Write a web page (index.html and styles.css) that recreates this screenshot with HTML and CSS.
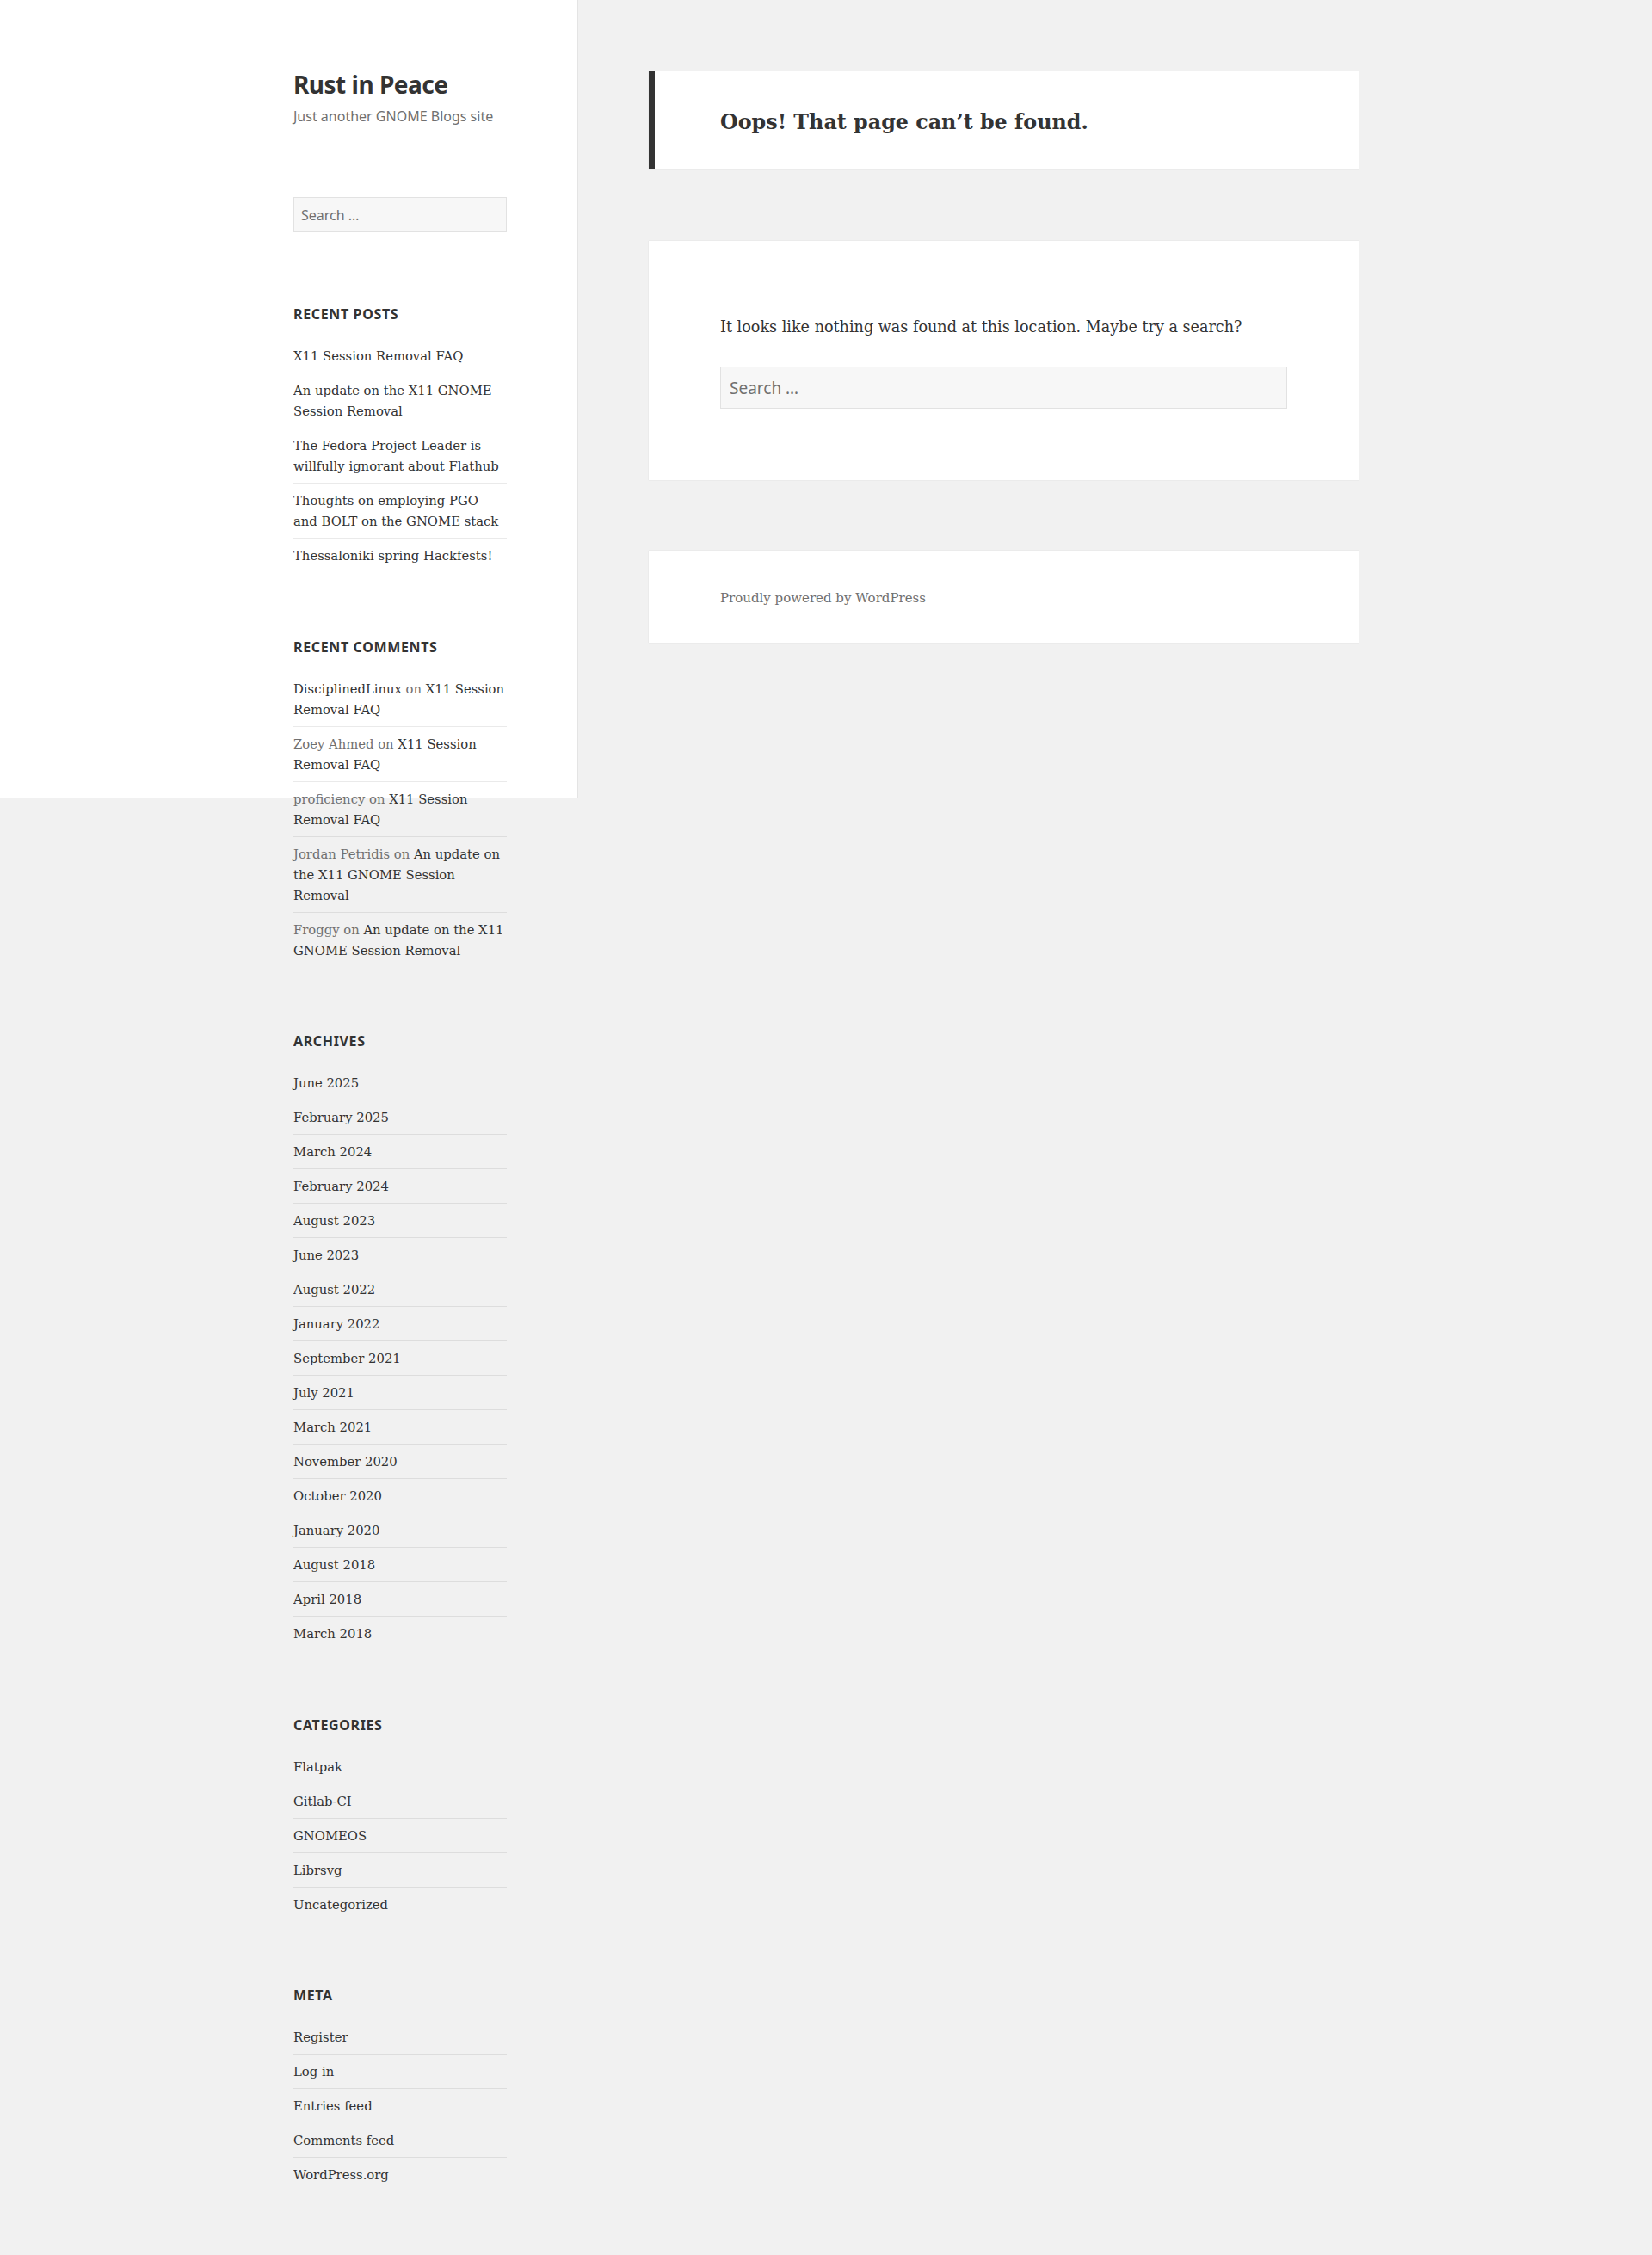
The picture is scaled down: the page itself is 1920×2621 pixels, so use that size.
FILE: index.html
```html
<!DOCTYPE html>
<html lang="en">
<head>
    <meta charset="UTF-8">
    <meta name="viewport" content="width=device-width, initial-scale=1.0">
    <title>Page not found – Rust in Peace</title>
    <link rel="stylesheet" href="styles.css">
</head>
<body>
    <div class="site">
        <div class="sidebar">
            <header class="site-header">
                <p class="site-title"><a href="#">Rust in Peace</a></p>
                <p class="site-description">Just another GNOME Blogs site</p>
            </header>

            <div class="widget-area">
                <section class="widget widget-search">
                    <form class="search-form">
                        <input type="search" class="search-field" placeholder="Search &hellip;">
                    </form>
                </section>

                <section class="widget">
                    <h2 class="widget-title">Recent Posts</h2>
                    <ul>
                        <li><a href="#">X11 Session Removal FAQ</a></li>
                        <li><a href="#">An update on the X11 GNOME<br>Session Removal</a></li>
                        <li><a href="#">The Fedora Project Leader is<br>willfully ignorant about Flathub</a></li>
                        <li><a href="#">Thoughts on employing PGO<br>and BOLT on the GNOME stack</a></li>
                        <li><a href="#">Thessaloniki spring Hackfests!</a></li>
                    </ul>
                </section>

                <section class="widget">
                    <h2 class="widget-title">Recent Comments</h2>
                    <ul class="comments">
                        <li><a href="#">DisciplinedLinux</a> on <a href="#">X11 Session<br>Removal FAQ</a></li>
                        <li>Zoey Ahmed on <a href="#">X11 Session<br>Removal FAQ</a></li>
                        <li>proficiency on <a href="#">X11 Session<br>Removal FAQ</a></li>
                        <li>Jordan Petridis on <a href="#">An update on<br>the X11 GNOME Session<br>Removal</a></li>
                        <li>Froggy on <a href="#">An update on the X11<br>GNOME Session Removal</a></li>
                    </ul>
                </section>

                <section class="widget">
                    <h2 class="widget-title">Archives</h2>
                    <ul>
                        <li><a href="#">June 2025</a></li>
                        <li><a href="#">February 2025</a></li>
                        <li><a href="#">March 2024</a></li>
                        <li><a href="#">February 2024</a></li>
                        <li><a href="#">August 2023</a></li>
                        <li><a href="#">June 2023</a></li>
                        <li><a href="#">August 2022</a></li>
                        <li><a href="#">January 2022</a></li>
                        <li><a href="#">September 2021</a></li>
                        <li><a href="#">July 2021</a></li>
                        <li><a href="#">March 2021</a></li>
                        <li><a href="#">November 2020</a></li>
                        <li><a href="#">October 2020</a></li>
                        <li><a href="#">January 2020</a></li>
                        <li><a href="#">August 2018</a></li>
                        <li><a href="#">April 2018</a></li>
                        <li><a href="#">March 2018</a></li>
                    </ul>
                </section>

                <section class="widget">
                    <h2 class="widget-title">Categories</h2>
                    <ul>
                        <li><a href="#">Flatpak</a></li>
                        <li><a href="#">Gitlab-CI</a></li>
                        <li><a href="#">GNOMEOS</a></li>
                        <li><a href="#">Librsvg</a></li>
                        <li><a href="#">Uncategorized</a></li>
                    </ul>
                </section>

                <section class="widget">
                    <h2 class="widget-title">Meta</h2>
                    <ul>
                        <li><a href="#">Register</a></li>
                        <li><a href="#">Log in</a></li>
                        <li><a href="#">Entries feed</a></li>
                        <li><a href="#">Comments feed</a></li>
                        <li><a href="#">WordPress.org</a></li>
                    </ul>
                </section>
            </div>
        </div>

        <main class="site-main">
            <section class="page-header">
                <h1 class="page-title">Oops! That page can&rsquo;t be found.</h1>
            </section>

            <section class="page-content">
                <p>It looks like nothing was found at this location. Maybe try a search?</p>
                <form class="search-form">
                    <input type="search" class="search-field" placeholder="Search &hellip;">
                </form>
            </section>

            <footer class="site-footer">
                <a href="#">Proudly powered by WordPress</a>
            </footer>
        </main>
    </div>
</body>
</html>
```
FILE: styles.css
```css
body {
    margin: 0;
    color: #333;
    font-family: "DejaVu Serif", "Liberation Serif", serif;
    background:
        linear-gradient(#fff, #fff) 0 0 / 671px 927px no-repeat,
        linear-gradient(#e4e4e4, #e4e4e4) 0 0 / 672px 928px no-repeat,
        #f1f1f1;
}
a {
    color: #333;
    text-decoration: none;
}
.site {
    display: flex;
    align-items: flex-start;
}

/* sidebar */
.sidebar {
    width: 248px;
    margin-left: 341px;
    padding-top: 81px;
}
.site-title {
    margin: 0;
    font-family: "Noto Sans", sans-serif;
    font-size: 28px;
    font-weight: 700;
    line-height: 35px;
    letter-spacing: -0.5px;
}
.site-description {
    margin: 7px 0 0;
    font-family: "Noto Sans", sans-serif;
    font-size: 16px;
    line-height: 24px;
    color: #707070;
}
.widget {
    margin-bottom: 74.5px;
}
.widget-search {
    margin: 82px 0 83px;
}
.widget-title {
    margin: 0 0 17px;
    font-family: "Noto Sans", sans-serif;
    font-size: 16px;
    font-weight: 700;
    line-height: 24px;
    letter-spacing: 0.04em;
    text-transform: uppercase;
}
.widget ul {
    list-style: none;
    margin: 0;
    padding: 0;
}
.widget li {
    padding: 8px 0 7px;
    border-top: 1px solid rgba(51, 51, 51, 0.1);
    font-size: 14.8px;
    line-height: 24px;
    white-space: nowrap;
}
.widget li:first-child {
    border-top: 0;
}
.comments li {
    color: #707070;
}

/* search fields */
.search-field {
    box-sizing: border-box;
    display: block;
    width: 100%;
    height: 41px;
    margin: 0;
    padding: 0 8px;
    border: 1px solid rgba(51, 51, 51, 0.1);
    border-radius: 0;
    background: #f7f7f7;
    color: #333;
    font-family: "Noto Sans", sans-serif;
    font-size: 16px;
    outline: none;
}
.search-field::placeholder {
    color: #707070;
}
.page-content .search-field {
    height: 49px;
    padding: 0 10px;
    font-size: 19px;
}

/* main column */
.site-main {
    width: 825px;
    margin-left: 165px;
    padding-top: 83px;
}
.page-header,
.page-content,
.site-footer {
    background: #fff;
    box-shadow: 0 0 1px rgba(0, 0, 0, 0.15);
}
.page-header {
    padding: 43px 76px 39px;
    border-left: 7px solid #333;
}
.page-title {
    margin: 0;
    font-size: 23.8px;
    font-weight: 700;
    line-height: 32px;
}
.page-content {
    margin-top: 83px;
    padding: 84px 83px 83px;
}
.page-content p {
    margin: 0 0 30px;
    font-size: 17.6px;
    line-height: 32px;
}
.site-footer {
    margin-top: 82px;
    padding: 43px 83px 40px;
    font-size: 15px;
    line-height: 24px;
}
.site-footer a {
    color: #707070;
}
```
